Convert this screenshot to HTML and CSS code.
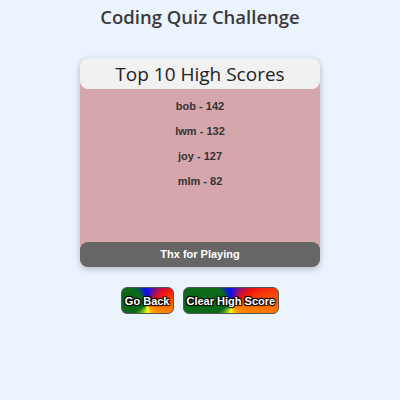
FILE: index.html
```html
<!DOCTYPE html>
<html>
<head>
<meta charset="utf-8">
<link rel="stylesheet" href="styles.css">
</head>
<body>
<h1 class="title">Coding Quiz Challenge</h1>
<div class="card">
  <div class="card-header">Top 10 High Scores</div>
  <ul class="scores">
    <li>bob - 142</li>
    <li>lwm - 132</li>
    <li>joy - 127</li>
    <li>mlm - 82</li>
  </ul>
  <div class="card-footer">Thx for Playing</div>
</div>
<div class="actions">
  <button class="btn">Go Back</button>
  <button class="btn">Clear High Score</button>
</div>
</body>
</html>
```
FILE: styles.css
```css
html, body {
  margin: 0;
  padding: 0;
}
body {
  background: #ebf3fd;
  font-family: "Open Sans", "Noto Sans", sans-serif;
  color: #333;
}
.title {
  margin: 0;
  padding-top: 4px;
  text-align: center;
  font-size: 18.5px;
  font-weight: 600;
  line-height: 26px;
  color: #3a3a3a;
}
.card {
  width: 240px;
  margin: 28px auto 0;
  border-radius: 8px;
  background: #d5a7ad;
  box-shadow: 0 2px 6px rgba(0,0,0,0.25);
  display: flex;
  flex-direction: column;
}
.card-header {
  background: #f1f1f1;
  border-radius: 8px;
  height: 31px;
  line-height: 32px;
  text-align: center;
  font-size: 19px;
  font-weight: 500;
  color: #222;
}
.scores {
  list-style: none;
  margin: 0;
  padding: 5px 0 0;
  height: 148px;
  font-family: "Liberation Sans", Arial, sans-serif;
  font-weight: bold;
  font-size: 11px;
  color: #333;
  text-align: center;
}
.scores li {
  height: 25px;
  line-height: 24px;
}
.card-footer {
  background: #666;
  border-radius: 8px;
  height: 25px;
  line-height: 25px;
  text-align: center;
  font-family: "Liberation Sans", Arial, sans-serif;
  font-weight: bold;
  font-size: 11px;
  color: #fff;
}
.actions {
  display: flex;
  justify-content: center;
  gap: 9px;
  margin-top: 20px;
}
.btn {
  border: 1px solid #555;
  border-radius: 6px;
  height: 27px;
  padding: 0 3px;
  font-family: "Liberation Sans", Arial, sans-serif;
  font-weight: bold;
  font-size: 11px;
  color: #fff;
  text-shadow: 1px 1px 1px #000, -1px -1px 1px #000, 1px -1px 1px #000, -1px 1px 1px #000;
  background: conic-gradient(from 0deg at 50% 65%, #1010f0 0deg, #f01010 55deg, #ff7000 95deg, #ffa000 145deg, #ffff00 180deg, #70b020 215deg, #0a6a1a 240deg, #0a6a1a 320deg, #1010f0 352deg, #1010f0 360deg);
}
```
